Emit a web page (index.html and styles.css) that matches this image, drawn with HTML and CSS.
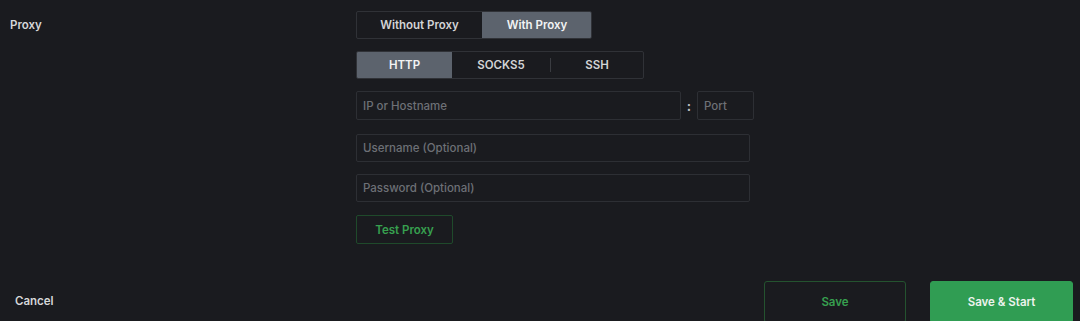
FILE: index.html
```html
<!DOCTYPE html>
<html>
<head>
<meta charset="utf-8">
<link rel="stylesheet" href="styles.css">
</head>
<body>
<div class="page">
  <div class="row">
    <div class="label">Proxy</div>
    <div class="content">
      <div class="seg seg-mode">
        <button class="seg-btn">Without Proxy</button>
        <button class="seg-btn active">With Proxy</button>
      </div>
      <div class="seg seg-type">
        <button class="seg-btn active">HTTP</button>
        <button class="seg-btn">SOCKS5</button>
        <button class="seg-btn sep">SSH</button>
      </div>
      <div class="host-row">
        <input class="field host" placeholder="IP or Hostname">
        <span class="colon">:</span>
        <input class="field port" placeholder="Port">
      </div>
      <input class="field wide user" placeholder="Username (Optional)">
      <input class="field wide pass" placeholder="Password (Optional)">
      <button class="test-btn">Test Proxy</button>
    </div>
  </div>
  <div class="footer">
    <button class="cancel">Cancel</button>
    <div class="actions">
      <button class="btn-outline">Save</button>
      <button class="btn-primary">Save &amp; Start</button>
    </div>
  </div>
</div>
</body>
</html>
```

FILE: styles.css
```css
html, body {
  margin: 0;
  padding: 0;
  background: #1a1b1f;
  height: 100%;
  overflow: hidden;
}
* { box-sizing: border-box; }
body {
  font-family: Inter, "Liberation Sans", sans-serif;
  font-size: 11.5px;
  color: #d9dadc;
}
button, input {
  font-family: inherit;
  font-size: 11.5px;
}
.page {
  padding: 11px 7px 0 10px;
}
.row {
  display: flex;
}
.label {
  width: 346px;
  font-weight: 600;
  color: #d6d7d9;
  padding-top: 7px;
  line-height: 14px;
}
.content {
  display: flex;
  flex-direction: column;
  align-items: flex-start;
}
.seg {
  display: grid;
  border: 1px solid #303237;
  border-radius: 2px;
  overflow: hidden;
}
.seg-mode {
  grid-template-columns: 125px 110px;
  height: 28px;
  width: 236px;
}
.seg-type {
  grid-template-columns: 95px 98px 94px;
  height: 28px;
  width: 288px;
  margin-top: 12px;
}
.seg-btn {
  background: transparent;
  border: 0;
  color: #d3d4d6;
  font-weight: 600;
  padding: 0;
  position: relative;
}
.seg-btn.active {
  background: #5c636d;
  color: #f2f3f4;
}
.seg-btn.sep::before {
  content: "";
  position: absolute;
  left: 0;
  top: 6px;
  bottom: 6px;
  width: 1px;
  background: #3a3c41;
}
.host-row {
  display: flex;
  align-items: center;
  margin-top: 12px;
}
.field {
  background: transparent;
  border: 1px solid #2d2f34;
  border-radius: 2px;
  height: 29px;
  padding: 0 6px;
  color: #d9dadc;
  outline: none;
}
.field::placeholder {
  color: #6d7076;
  font-weight: 500;
}
.host { width: 325px; }
.colon {
  width: 16px;
  text-align: center;
  color: #bfc0c3;
  font-weight: 700;
  font-size: 13px;
}
.port { width: 57px; }
.wide { width: 394px; height: 28px; }
.user { margin-top: 14px; }
.pass { margin-top: 12px; }
.test-btn {
  margin-top: 13px;
  width: 97px;
  height: 29px;
  background: transparent;
  border: 1px solid #1f4a2b;
  border-radius: 2px;
  color: #37a04f;
  font-weight: 600;
}
.footer {
  display: flex;
  justify-content: space-between;
  align-items: flex-start;
  margin-top: 37px;
}
.cancel {
  background: transparent;
  border: 0;
  padding: 0;
  margin: 13px 0 0 5px;
  color: #d6d7d9;
  font-weight: 600;
}
.actions {
  display: flex;
  gap: 24px;
}
.btn-outline, .btn-primary {
  width: 142px;
  height: 42px;
  border-radius: 3px;
  font-weight: 600;
}
.btn-outline {
  background: transparent;
  border: 1px solid #24532f;
  color: #37a04f;
}
.btn-primary {
  width: 143px;
  background: #309d53;
  border: 1px solid #309d53;
  color: #eef3ee;
}
```
